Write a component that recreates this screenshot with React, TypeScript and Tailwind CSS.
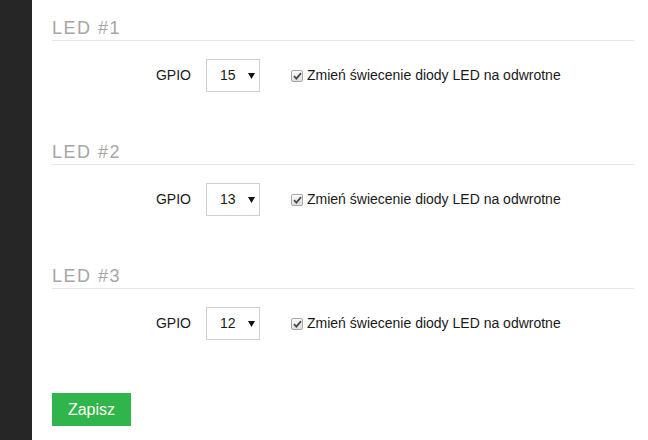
const leds = [
  { name: "LED #1", gpio: "15" },
  { name: "LED #2", gpio: "13" },
  { name: "LED #3", gpio: "12" },
];

function CheckBox() {
  return (
    <span className="flex h-[12px] w-[12px] items-center justify-center rounded-[2px] border border-[#a8a8a8] bg-gradient-to-b from-[#fcfcfc] to-[#dedede]">
      <svg width="9" height="8" viewBox="0 0 9 8">
        <path d="M1 4.2 L3.4 6.6 L8 1.2" fill="none" stroke="#4a4a4a" strokeWidth="1.8" />
      </svg>
    </span>
  );
}

function LedSection({ name, gpio }: { name: string; gpio: string }) {
  return (
    <section className="mb-[48px]">
      <h2 className="h-[25px] border-b border-[#e6e6e6] text-[18px] leading-[24px] tracking-[1.5px] text-[#a6a6a6]">
        {name}
      </h2>
      <div className="mt-[18px] flex h-[33px] items-center">
        <span className="w-[139px] text-right text-[14px] text-[#1a1a1a]">GPIO</span>
        <div className="ml-[15px] flex h-[33px] w-[54px] items-center border border-[#cfcfcf] bg-white pl-[13px] text-[14px] text-[#1a1a1a]">
          <span>{gpio}</span>
          <svg className="ml-[12px]" width="7" height="6" viewBox="0 0 7 6">
            <path d="M0 0 H7 L3.5 6 Z" fill="#111" />
          </svg>
        </div>
        <label className="ml-[31px] flex items-center gap-[4px] text-[14px] text-[#1a1a1a]">
          <CheckBox />
          <span>Zmień świecenie diody LED na odwrotne</span>
        </label>
      </div>
    </section>
  );
}

export default function App() {
  return (
    <div className="flex h-[440px] w-[648px] overflow-hidden bg-white font-['Liberation_Sans',Arial,sans-serif]">
      <aside className="w-[32px] shrink-0 bg-[#262626]" />
      <main className="flex-1 pl-[20px] pr-[14px] pt-[16px]">
        {leds.map((l) => (
          <LedSection key={l.name} name={l.name} gpio={l.gpio} />
        ))}
        <button className="mt-[5px] h-[33px] w-[79px] bg-[#30b54c] text-[16px] text-[#fdfdf0]">
          Zapisz
        </button>
      </main>
    </div>
  );
}
